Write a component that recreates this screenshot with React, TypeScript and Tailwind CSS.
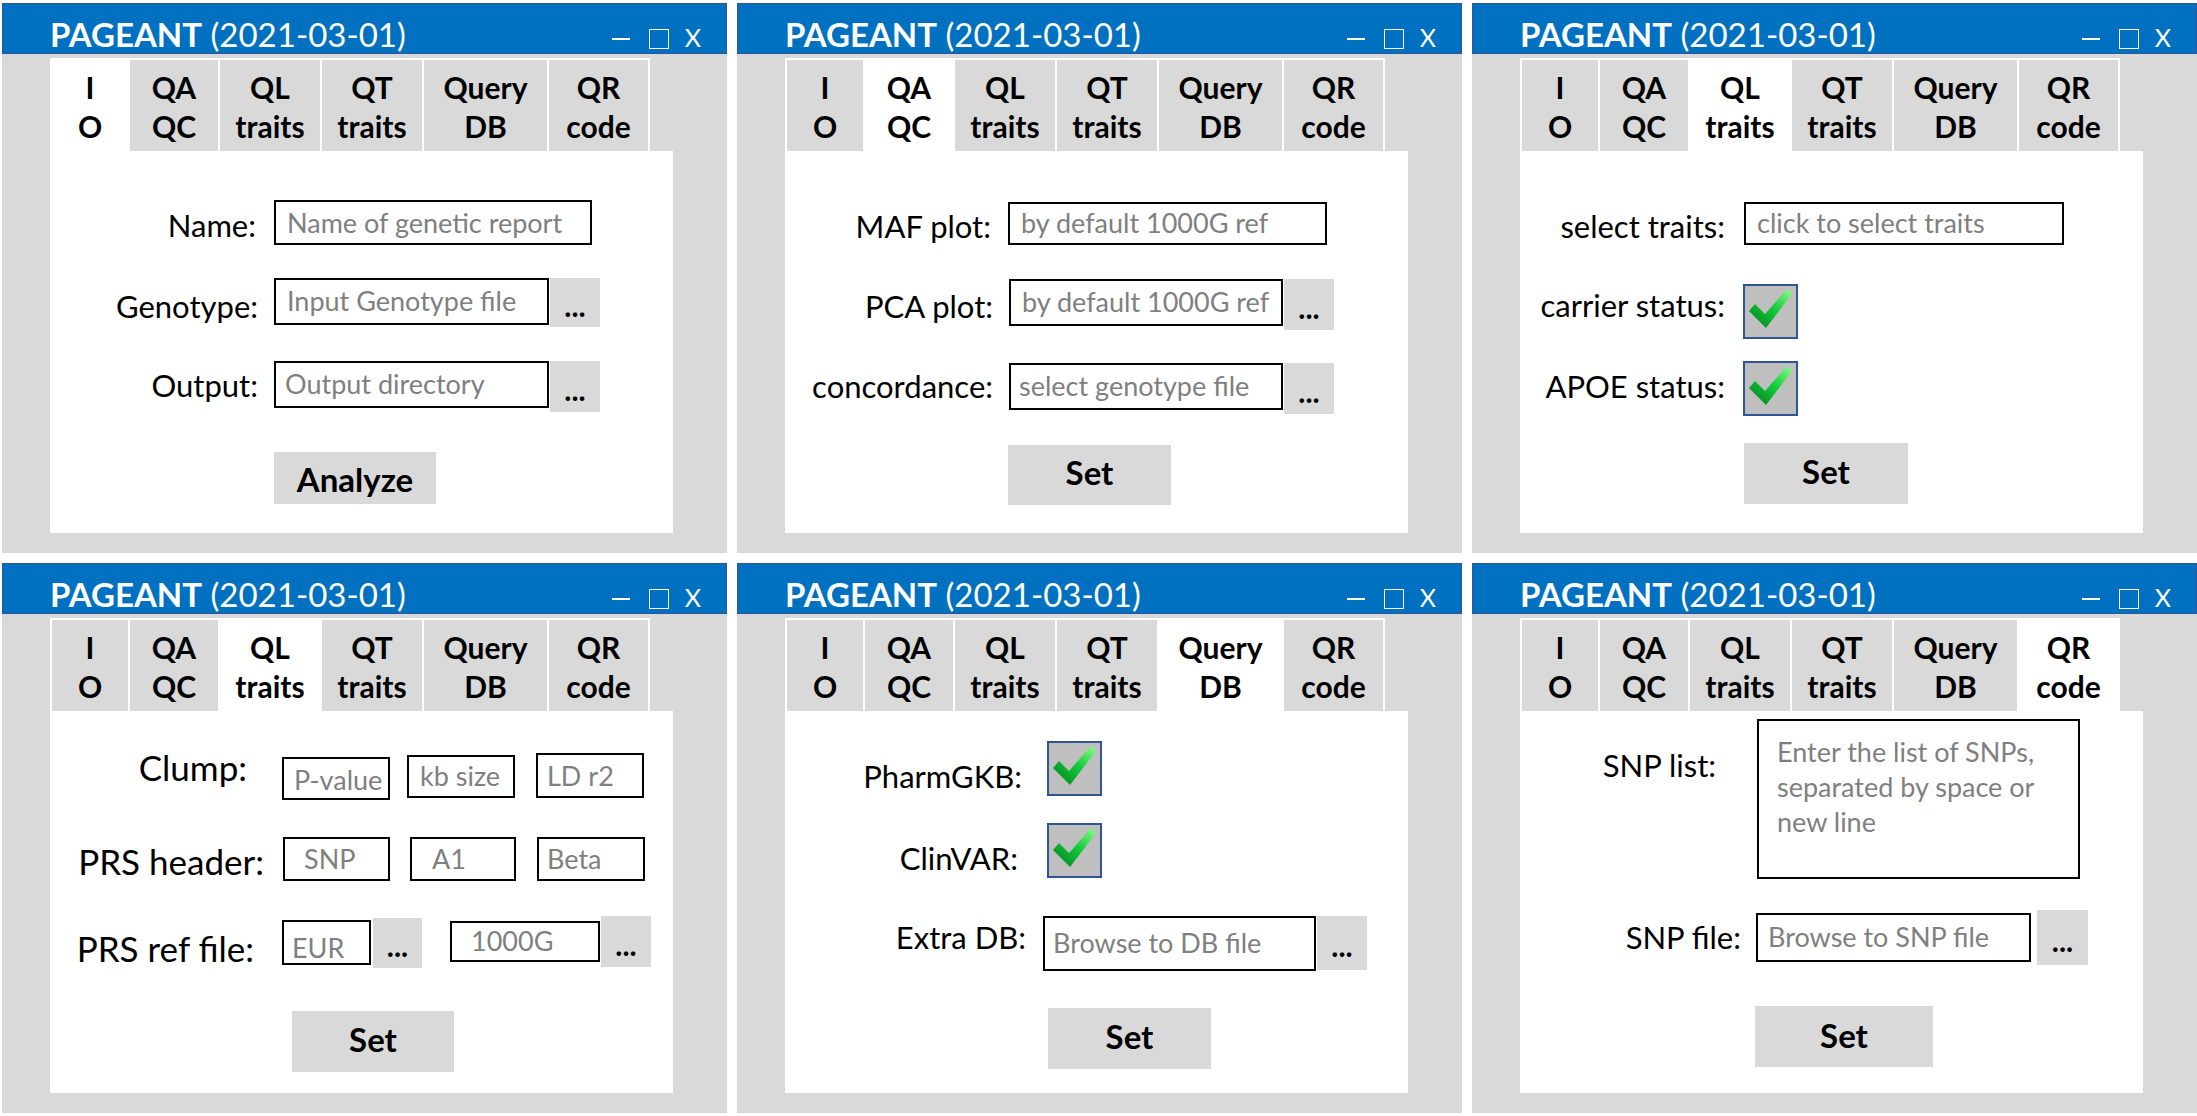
import React from "react";

const TABS: [string, string, string][] = [
  ["I", "O", "w-[76px]"],
  ["QA", "QC", "w-[88px]"],
  ["QL", "traits", "w-[100px]"],
  ["QT", "traits", "w-[100px]"],
  ["Query", "DB", "w-[123px]"],
  ["QR", "code", "w-[99px]"],
];

function TitleBar() {
  return (
    <div className="h-[51px] shrink-0 bg-[#0070C0] border border-[#2F5597] flex items-start pl-[47px] pr-[25px] text-white">
      <div className="pt-[12px] text-[33px] leading-[36px] whitespace-nowrap">
        <span className="font-bold">PAGEANT</span> (2021-03-01)
      </div>
      <div className="ml-auto flex items-start">
        <div className="mt-[34px] w-[18px] h-[2px] bg-white" />
        <div className="ml-[19px] mt-[25px] w-[20px] h-[20px] border-[1.5px] border-white" />
        <div className="ml-[16px] mt-[21px] text-[25px] leading-[25px]">X</div>
      </div>
    </div>
  );
}

function Panel({ active, children }: { active: number; children: React.ReactNode }) {
  return (
    <div className="w-[725px] h-[550px] flex flex-col">
      <TitleBar />
      <div className="flex-1 bg-[#D9D9D9] pl-[48px] pt-[4px]">
        <div className="w-[623px]">
          <div className="flex w-fit bg-white p-[2px] pb-0 gap-[2px]">
            {TABS.map(([a, b, w], i) => (
              <div
                key={i}
                className={`${w} h-[91px] flex flex-col items-center pt-[8px] text-[30px] font-bold leading-[39px] text-black ${
                  i === active ? "bg-white" : "bg-[#D9D9D9]"
                }`}
              >
                <div>{a}</div>
                <div>{b}</div>
              </div>
            ))}
          </div>
          <div className="h-[382px] bg-white flex flex-col">{children}</div>
        </div>
      </div>
    </div>
  );
}

function Box({ cls, text, pad }: { cls: string; text: string; pad: string }) {
  return (
    <div className={`${cls} border-2 border-black bg-white flex items-center ${pad} text-[27px] text-[#7F7F7F] whitespace-nowrap overflow-hidden`}>
      {text}
    </div>
  );
}

function Dots({ cls }: { cls: string }) {
  return (
    <div className={`${cls} bg-[#D9D9D9] flex items-center justify-center text-[30px] font-bold leading-none text-black`}>
      <span className="pt-[4px]">...</span>
    </div>
  );
}

function Btn({ cls, text }: { cls: string; text: string }) {
  return (
    <div className={`${cls} bg-[#D9D9D9] flex items-center justify-center text-[33px] font-bold text-black`}>
      {text}
    </div>
  );
}

function Check({ cls }: { cls: string }) {
  return (
    <div className={`${cls} w-[55px] h-[55px] bg-[#BFBFBF] border-2 border-[#2F5597] flex items-center justify-center`}>
      <svg width="51" height="51" viewBox="0 0 51 51">
        <defs>
          <linearGradient id="chk" x1="1" y1="0" x2="0" y2="1">
            <stop offset="0" stopColor="#8CFF8C" />
            <stop offset="0.45" stopColor="#14CC3A" />
            <stop offset="1" stopColor="#007A1C" />
          </linearGradient>
        </defs>
        <path d="M4 25 L10 18 L20 28 L42 3 L47 8 L21 42 Z" fill="url(#chk)" />
      </svg>
    </div>
  );
}

function P1() {
  return (
    <Panel active={0}>
      <div className="pt-[49px] flex items-start">
        <div className="w-[206px] h-[45px] flex items-center justify-end pt-[6px] text-[31px]">Name:</div>
        <Box cls="ml-[18px] w-[318px] h-[45px]" pad="pl-[11px] pt-[2px]" text="Name of genetic report" />
      </div>
      <div className="mt-[33px] flex items-start">
        <div className="w-[208px] h-[47px] flex items-center justify-end pt-[9px] text-[31px]">Genotype:</div>
        <Box cls="ml-[16px] w-[275px] h-[47px]" pad="pl-[11px]" text="Input Genotype file" />
        <Dots cls="ml-[1px] w-[50px] h-[49px]" />
      </div>
      <div className="mt-[34px] flex items-start">
        <div className="w-[208px] h-[47px] flex items-center justify-end pt-[1px] text-[31px]">Output:</div>
        <Box cls="ml-[16px] w-[275px] h-[47px]" pad="pl-[9px]" text="Output directory" />
        <Dots cls="ml-[1px] w-[50px] h-[51px]" />
      </div>
      <div className="mt-[40px] flex">
        <Btn cls="ml-[224px] w-[162px] h-[52px] pt-[3px]" text="Analyze" />
      </div>
    </Panel>
  );
}

function P2() {
  return (
    <Panel active={1}>
      <div className="pt-[51px] flex items-start">
        <div className="w-[206px] h-[43px] flex items-center justify-end pt-[6px] text-[31px]">MAF plot:</div>
        <Box cls="ml-[17px] w-[319px] h-[43px]" pad="pl-[11px]" text="by default 1000G ref" />
      </div>
      <div className="mt-[34px] flex items-start">
        <div className="w-[208px] h-[47px] flex items-center justify-end pt-[7px] text-[31px]">PCA plot:</div>
        <Box cls="ml-[16px] w-[274px] h-[47px]" pad="pl-[11px]" text="by default 1000G ref" />
        <Dots cls="ml-[1px] w-[50px] h-[51px]" />
      </div>
      <div className="mt-[33px] flex items-start">
        <div className="w-[208px] h-[47px] flex items-center justify-end text-[31px]">concordance:</div>
        <Box cls="ml-[16px] w-[274px] h-[47px]" pad="pl-[8px]" text="select genotype file" />
        <Dots cls="ml-[1px] w-[50px] h-[51px]" />
      </div>
      <div className="mt-[31px] flex">
        <Btn cls="ml-[223px] w-[163px] h-[60px] pb-[4px]" text="Set" />
      </div>
    </Panel>
  );
}

function P3() {
  return (
    <Panel active={2}>
      <div className="pt-[51px] flex items-start">
        <div className="w-[205px] h-[43px] flex items-center justify-end pt-[6px] text-[31px]">select traits:</div>
        <Box cls="ml-[19px] w-[320px] h-[43px]" pad="pl-[11px]" text="click to select traits" />
      </div>
      <div className="mt-[39px] flex items-start">
        <div className="w-[205px] h-[55px] flex items-center justify-end pb-[13px] text-[31px]">carrier status:</div>
        <Check cls="ml-[18px]" />
      </div>
      <div className="mt-[22px] flex items-start">
        <div className="w-[205px] h-[55px] flex items-center justify-end pb-[4px] text-[31px]">APOE status:</div>
        <Check cls="ml-[18px]" />
      </div>
      <div className="mt-[27px] flex">
        <Btn cls="ml-[224px] w-[164px] h-[61px] pb-[4px]" text="Set" />
      </div>
    </Panel>
  );
}

function P4() {
  return (
    <Panel active={2}>
      <div className="pt-[42px] flex items-start">
        <div className="w-[197px] h-[43px] mt-[4px] flex items-center justify-end pb-[22px] text-[35px]">Clump:</div>
        <Box cls="ml-[35px] mt-[4px] w-[108px] h-[43px]" pad="pl-[10px] pt-[4px]" text="P-value" />
        <Box cls="ml-[17px] mt-[2px] w-[108px] h-[43px]" pad="pl-[11px]" text="kb size" />
        <Box cls="ml-[21px] w-[108px] h-[45px]" pad="pl-[9px] pt-[2px]" text="LD r2" />
      </div>
      <div className="mt-[37px] flex items-start">
        <div className="w-[214px] h-[44px] flex items-center justify-end pt-[4px] text-[35px]">PRS header:</div>
        <Box cls="ml-[19px] w-[107px] h-[44px]" pad="pl-[19px]" text="SNP" />
        <Box cls="ml-[20px] w-[106px] h-[44px]" pad="pl-[20px]" text="A1" />
        <Box cls="ml-[21px] w-[108px] h-[44px]" pad="pl-[8px]" text="Beta" />
      </div>
      <div className="mt-[35px] flex items-start">
        <div className="w-[204px] h-[45px] mt-[4px] flex items-center justify-end pt-[11px] text-[35px]">PRS ref file:</div>
        <Box cls="ml-[28px] mt-[4px] w-[89px] h-[45px]" pad="pl-[8px] pt-[12px]" text="EUR" />
        <Dots cls="ml-[2px] mt-[2px] w-[49px] h-[50px]" />
        <Box cls="ml-[28px] mt-[5px] w-[150px] h-[41px]" pad="pl-[19px]" text="1000G" />
        <Dots cls="ml-[1px] w-[50px] h-[51px]" />
      </div>
      <div className="mt-[43px] flex">
        <Btn cls="ml-[242px] w-[162px] h-[61px] pb-[4px]" text="Set" />
      </div>
    </Panel>
  );
}

function P5() {
  return (
    <Panel active={4}>
      <div className="pt-[30px] flex items-start">
        <div className="w-[237px] h-[55px] flex items-center justify-end pt-[15px] text-[31px]">PharmGKB:</div>
        <Check cls="ml-[25px]" />
      </div>
      <div className="mt-[27px] flex items-start">
        <div className="w-[233px] h-[55px] flex items-center justify-end pt-[15px] text-[31px]">ClinVAR:</div>
        <Check cls="ml-[29px]" />
      </div>
      <div className="mt-[38px] flex items-start">
        <div className="w-[241px] h-[55px] flex items-center justify-end pb-[12px] text-[31px]">Extra DB:</div>
        <Box cls="ml-[17px] w-[273px] h-[55px]" pad="pl-[8px]" text="Browse to DB file" />
        <Dots cls="ml-[1px] w-[50px] h-[54px]" />
      </div>
      <div className="mt-[37px] flex">
        <Btn cls="ml-[263px] w-[163px] h-[61px] pb-[4px]" text="Set" />
      </div>
    </Panel>
  );
}

function P6() {
  return (
    <Panel active={5}>
      <div className="pt-[8px] flex items-start">
        <div className="w-[196px] pt-[28px] text-right text-[31px] leading-[36px]">SNP list:</div>
        <div className="ml-[41px] w-[323px] h-[160px] border-2 border-black bg-white pl-[18px] pt-[13px] text-[27px] leading-[35px] text-[#7F7F7F] whitespace-nowrap">
          <div>Enter the list of SNPs,</div>
          <div>separated by space or</div>
          <div>new line</div>
        </div>
      </div>
      <div className="mt-[31px] flex items-start">
        <div className="w-[221px] h-[49px] mt-[3px] flex items-center justify-end text-[31px]">SNP file:</div>
        <Box cls="ml-[15px] mt-[3px] w-[275px] h-[49px]" pad="pl-[10px]" text="Browse to SNP file" />
        <Dots cls="ml-[6px] w-[51px] h-[55px]" />
      </div>
      <div className="mt-[41px] flex">
        <Btn cls="ml-[235px] w-[178px] h-[61px] pb-[2px]" text="Set" />
      </div>
    </Panel>
  );
}

export default function App() {
  return (
    <div className="w-[2197px] h-[1116px] bg-white overflow-hidden font-['Lato',sans-serif] text-black">
      <div className="grid grid-cols-[725px_725px_725px] gap-x-[10px] gap-y-[10px] pl-[2px] pt-[3px]">
        <P1 />
        <P2 />
        <P3 />
        <P4 />
        <P5 />
        <P6 />
      </div>
    </div>
  );
}
